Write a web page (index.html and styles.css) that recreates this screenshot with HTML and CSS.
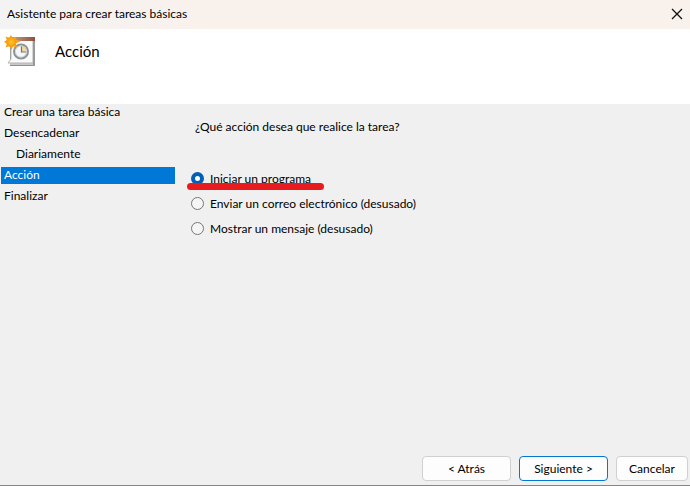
FILE: index.html
```html
<!DOCTYPE html>
<html lang="es">
<head>
<meta charset="utf-8">
<title>Asistente para crear tareas básicas</title>
<link rel="stylesheet" href="styles.css">
</head>
<body>
<div class="wizard">
  <header class="titlebar">
    <span>Asistente para crear tareas básicas</span>
    <button class="close" type="button" aria-label="Cerrar">
      <svg width="12" height="12" viewBox="0 0 12 12"><path d="M1 1L11 11M11 1L1 11" fill="none" stroke="#111" stroke-width="1.3"/></svg>
    </button>
  </header>
  <div class="banner">
    <svg class="task-icon" width="34" height="34" viewBox="0 0 34 34" aria-hidden="true">
      <defs>
        <linearGradient id="wood" x2="1"><stop offset="0" stop-color="#c39a88"/><stop offset="1" stop-color="#8d5140"/></linearGradient>
        <radialGradient id="sun"><stop offset="0" stop-color="#ffc62b"/><stop offset="1" stop-color="#f59a0c"/></radialGradient>
      </defs>
      <path d="M6 6H31V31H6Z" fill="#8e8e8e"/>
      <path d="M6 28H28V7H30V30H6Z" fill="#c9c9c9"/>
      <path d="M7 5H29V28H4L7 24Z" fill="#fafafa" stroke="#b5b5b5"/>
      <path d="M8 2H31V6H8Z" fill="url(#wood)"/>
      <path d="M29 6H31V31H29Z" fill="#999"/>
      <circle cx="17" cy="16.500" r="7" fill="#f4f6f7" stroke="#8d9295" stroke-width="2"/>
      <path d="M17 16.500V10.500A6 6 0 0 1 23 16.500Z" fill="#f6d99b"/>
      <circle cx="17" cy="16.500" r="5.600" fill="none" stroke="#c3cbcf" stroke-width=".8"/>
      <path d="M17.500 11.500V17H22" fill="none" stroke="#6b757c" stroke-width="1.200"/>
      <path d="M7 0L8.700 3L12.500 1.500L11.500 4.500L17 6L11.800 8.500L13 12.500L9 11.200L7.500 15L5.300 11.200L1.500 12.500L2.800 8.800L0 7L2.800 5L1.500 1.500L5.300 2.800Z" fill="#f6a21b"/>
      <circle cx="7.300" cy="7" r="4.800" fill="url(#sun)"/>
    </svg>
    <h1>Acción</h1>
  </div>
  <div class="body">
    <ol class="steps">
      <li>Crear una tarea básica</li>
      <li>Desencadenar</li>
      <li class="sub">Diariamente</li>
      <li class="current" aria-current="step">Acción</li>
      <li>Finalizar</li>
    </ol>
    <main class="page">
      <p id="question">¿Qué acción desea que realice la tarea?</p>
      <div class="options" role="radiogroup" aria-labelledby="question">
        <label class="option marked"><input type="radio" name="action" checked>Iniciar un programa</label>
        <label class="option"><input type="radio" name="action">Enviar un correo electrónico (desusado)</label>
        <label class="option"><input type="radio" name="action">Mostrar un mensaje (desusado)</label>
      </div>
    </main>
  </div>
  <footer class="actions">
    <button class="btn" type="button">&lt; Atrás</button>
    <button class="btn primary" type="button">Siguiente &gt;</button>
    <button class="btn cancel" type="button">Cancelar</button>
  </footer>
</div>
</body>
</html>
```

FILE: styles.css
```css
* { box-sizing: border-box; }

body {
  margin: 0;
  font: 12px/17px "Segoe UI", Lato, "Open Sans", sans-serif;
  color: #000;
}

.wizard {
  display: flex;
  flex-direction: column;
  min-height: 100vh;
  background: #f0f0f0;
  border-bottom: 1px solid #858585;
}

.titlebar {
  display: flex;
  align-items: center;
  justify-content: space-between;
  height: 29px;
  padding: 0 7px 2px;
  background: linear-gradient(90deg, #f3f3f3, #f9f1ec 30%);
}

.close {
  display: flex;
  padding: 0;
  border: 0;
  background: none;
}

.banner {
  display: flex;
  align-items: flex-start;
  gap: 17px;
  height: 75px;
  padding: 6px 4px;
  background: #fff;
}

h1 {
  margin: 6px 0;
  font-size: 15px;
  line-height: 20px;
  font-weight: 400;
}

.body {
  display: flex;
  flex: 1;
}

.steps {
  display: flex;
  flex-direction: column;
  gap: 4px;
  width: 174px;
  margin: 0 0 0 1px;
  padding: 0;
  list-style: none;
  line-height: 15px;
}

.steps li { padding: 0 3px 2px; }
.steps .sub { padding-left: 15px; }
.steps .current { background: #0078d7; color: #fff; }

.page {
  flex: 1;
  padding: 14px 16px;
}

.page p { margin: 0 0 35px 4px; }

.options {
  display: flex;
  flex-direction: column;
  align-items: flex-start;
  gap: 8px;
}

.option {
  display: flex;
  align-items: center;
  gap: 6px;
  position: relative;
}

.option input {
  appearance: none;
  width: 13px;
  height: 13px;
  margin: 0;
  border: 1px solid #767676;
  border-radius: 50%;
  background: #f5f5f5;
}

.option input:checked {
  border: 4px solid #005fb8;
  background: #fff;
}

.marked::after {
  content: "";
  position: absolute;
  top: 13px;
  left: -4px;
  right: -13px;
  height: 7px;
  border-radius: 4px;
  background: #e81c1e;
}

.actions {
  display: flex;
  justify-content: flex-end;
  gap: 8px;
  padding: 0 2px 4px;
}

.btn {
  width: 89px;
  height: 25px;
  padding: 0;
  border: 1px solid #d0d0d0;
  border-radius: 4px;
  background: #fdfdfd;
  color: #000;
  font: inherit;
}

.btn.primary { border-color: #0078d4; }
.btn.cancel { width: 72px; }
```
